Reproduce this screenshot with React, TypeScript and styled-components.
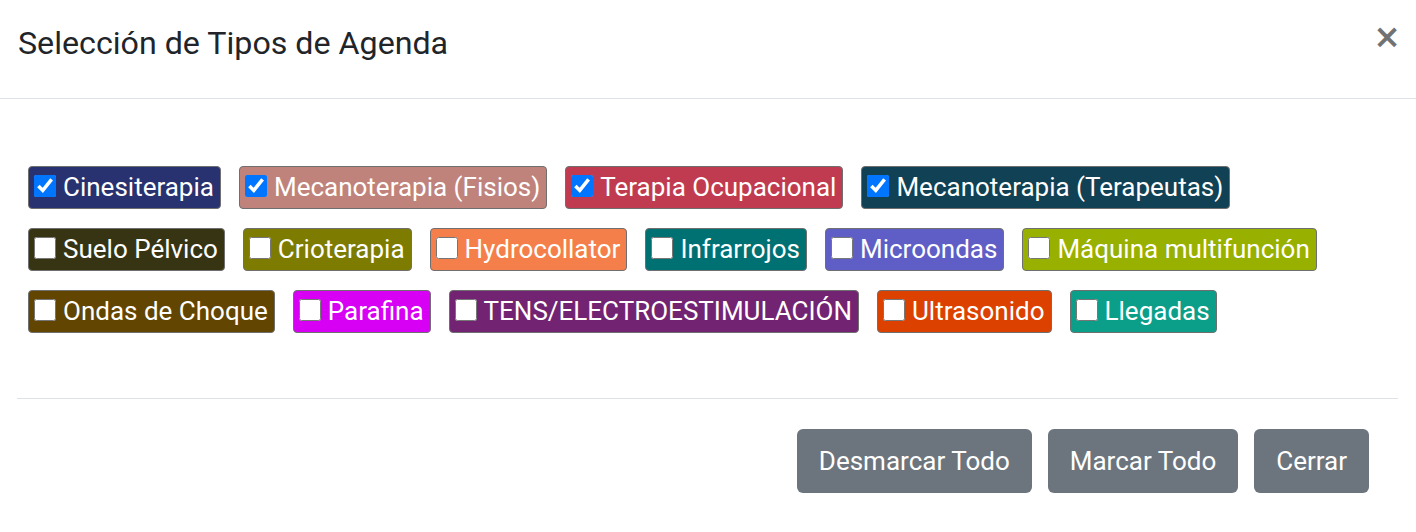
import React, { useState } from 'react';
import styled, { createGlobalStyle } from 'styled-components';

const GlobalStyle = createGlobalStyle`
  html, body {
    margin: 0;
    padding: 0;
    background: #fff;
    font-family: Roboto, "Liberation Sans", Arial, sans-serif;
    color: #212529;
  }
  * { box-sizing: border-box; }
`;

interface Tipo {
  name: string,
  color: string
}

const TIPOS: Tipo[] = [
  { name: 'Cinesiterapia', color: '#283270' },
  { name: 'Mecanoterapia (Fisios)', color: '#c0837b' },
  { name: 'Terapia Ocupacional', color: '#c13b50' },
  { name: 'Mecanoterapia (Terapeutas)', color: '#114155' },
  { name: 'Suelo Pélvico', color: '#373414' },
  { name: 'Crioterapia', color: '#7d7c00' },
  { name: 'Hydrocollator', color: '#f47f4a' },
  { name: 'Infrarrojos', color: '#007173' },
  { name: 'Microondas', color: '#5e5ec6' },
  { name: 'Máquina multifunción', color: '#98b000' },
  { name: 'Ondas de Choque', color: '#614500' },
  { name: 'Parafina', color: '#d700f5' },
  { name: 'TENS/ELECTROESTIMULACIÓN', color: '#722371' },
  { name: 'Ultrasonido', color: '#dc4100' },
  { name: 'Llegadas', color: '#0b9f89' },
];

const INITIAL = ['Cinesiterapia', 'Mecanoterapia (Fisios)', 'Terapia Ocupacional', 'Mecanoterapia (Terapeutas)'];

function App() {
  const [checked, setChecked] = useState<string[]>(INITIAL);

  function toggle(name: string) {
    setChecked(prev => prev.includes(name) ? prev.filter(n => n !== name) : [...prev, name]);
  }

  return (
    <>
      <GlobalStyle />
      <Dialog>
        <Header>
          <Title>Selección de Tipos de Agenda</Title>
          <Close aria-label="Cerrar">×</Close>
        </Header>
        <Body>
          <ChipList>
            {TIPOS.map(t => (
              <Chip key={t.name} $bg={t.color}>
                <input type="checkbox" checked={checked.includes(t.name)} onChange={() => toggle(t.name)} />
                <span>{t.name}</span>
              </Chip>
            ))}
          </ChipList>
        </Body>
        <Footer>
          <Button onClick={() => setChecked([])}>Desmarcar Todo</Button>
          <Button onClick={() => setChecked(TIPOS.map(t => t.name))}>Marcar Todo</Button>
          <Button>Cerrar</Button>
        </Footer>
      </Dialog>
    </>
  );
}

const Dialog = styled.div`
  width: 1416px;
  height: 532px;
  display: flex;
  flex-direction: column;
  background: #fff;
`;

const Header = styled.div`
  height: 99px;
  display: flex;
  align-items: flex-start;
  justify-content: space-between;
  padding: 24px 15px 0 18px;
  border-bottom: 1px solid #dee2e6;
`;

const Title = styled.h1`
  margin: 0;
  font-size: 32.2px;
  font-weight: 400;
  line-height: 1.2;
  color: #212529;
`;

const Close = styled.button`
  border: 0;
  background: transparent;
  padding: 0;
  margin-top: -4px;
  font-family: "DejaVu Sans", Roboto, sans-serif;
  font-size: 33px;
  font-weight: 700;
  line-height: 1;
  color: #000;
  opacity: 0.55;
  cursor: pointer;
`;

const Body = styled.div`
  height: 300px;
  margin: 0 18px 0 17px;
  padding: 67px 0 0 11px;
  border-bottom: 1px solid #dee2e6;
`;

const ChipList = styled.div`
  display: flex;
  flex-wrap: wrap;
  column-gap: 18px;
  row-gap: 19px;
`;

const Chip = styled.label<{ $bg: string }>`
  display: inline-flex;
  align-items: center;
  gap: 7px;
  height: 43px;
  padding: 0 6px 0 5px;
  background: ${p => p.$bg};
  border: 1px solid #6f6f6f;
  border-radius: 4px;
  color: #fff;
  font-size: 26px;
  line-height: 1.2;
  cursor: pointer;

  input {
    width: 22px;
    height: 22px;
    margin: 0 0 4px 0;
    cursor: pointer;
  }
`;

const Footer = styled.div`
  display: flex;
  justify-content: flex-end;
  gap: 16px;
  padding: 30px 47px 0 0;
`;

const Button = styled.button`
  height: 64px;
  padding: 0 22px;
  background: #6c757d;
  color: #fff;
  border: 0;
  border-radius: 6px;
  font-family: Roboto, "Liberation Sans", Arial, sans-serif;
  font-size: 26px;
  cursor: pointer;
`;

export default App;
